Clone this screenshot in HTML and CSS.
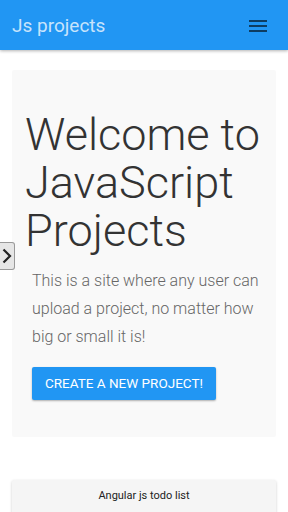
FILE: index.html
```html
<!DOCTYPE html>
<html>
<head>
<meta charset="utf-8">
<title>Js projects</title>
<link rel="stylesheet" href="styles.css">
</head>
<body>
<nav class="navbar">
	<span class="brand">Js projects</span>
	<button class="toggler" aria-label="menu">
		<span class="bar"></span>
		<span class="bar"></span>
		<span class="bar"></span>
	</button>
</nav>

<button class="side-toggle" aria-label="open sidebar">
	<svg width="12" height="20" viewBox="0 0 12 20"><path d="M2.5 3.5 L9 10 L2.5 16.5" fill="none" stroke="#222" stroke-width="2.2"/></svg>
</button>

<div class="container">
	<div class="jumbotron">
		<h1>Welcome to JavaScript Projects</h1>
		<div class="lead-wrap">
			<p class="lead">This is a site where any user can upload a project, no matter how big or small it is!</p>
			<a class="btn" href="#">Create a new project!</a>
		</div>
	</div>

	<div class="card">
		<div class="card-title">Angular js todo list</div>
	</div>
</div>
</body>
</html>
```

FILE: styles.css
```css
body {
	margin: 0;
	background-color: #fff;
	font-family: Roboto, "Noto Sans", Arial, sans-serif;
	color: #333;
	overflow: hidden;
	height: 512px;
}

.navbar {
	height: 50px;
	background-color: #2196f3;
	box-shadow: 0 1px 3px rgba(0, 0, 0, 0.3);
	display: flex;
	align-items: center;
	justify-content: space-between;
	padding: 0 21px 0 12px;
}

.brand {
	color: rgba(255, 255, 255, 0.75);
	font-size: 19px;
	margin-top: 0;
}

.toggler {
	background: none;
	border: none;
	padding: 0;
	display: flex;
	flex-direction: column;
	gap: 3px;
	margin-top: 1px;
}

.toggler .bar {
	display: block;
	width: 18px;
	height: 2px;
	background-color: rgba(0, 0, 0, 0.6);
}

.side-toggle {
	position: absolute;
	left: 0;
	top: 242px;
	width: 15px;
	height: 28px;
	padding: 0;
	border: 1px solid #999;
	border-left: none;
	border-radius: 0 3px 3px 0;
	background-color: #e6e6e6;
	display: flex;
	align-items: center;
	justify-content: center;
}

.container {
	padding: 20px 12px 0;
}

.jumbotron {
	background-color: #f9f9f9;
	padding: 41px 12px 37px 13px;
	border-radius: 2px;
}

h1 {
	font-size: 45px;
	font-weight: 300;
	line-height: 48px;
	margin: 0 0 12px;
	color: #333;
}

.lead-wrap {
	padding-left: 7px;
}

.lead {
	font-size: 16px;
	font-weight: 300;
	line-height: 28px;
	color: #666;
	margin: 0 0 16px;
}

.btn {
	display: inline-block;
	background-color: #2196f3;
	color: #fff;
	text-decoration: none;
	text-transform: uppercase;
	font-size: 13.5px;
	line-height: 19px;
	padding: 7px 13px;
	border-radius: 2px;
	box-shadow: 0 1px 2px rgba(0, 0, 0, 0.3);
}

.card {
	margin-top: 43px;
	background-color: #f5f5f5;
	border-radius: 2px;
	box-shadow: 0 1px 3px rgba(0, 0, 0, 0.2);
	padding: 9px 10px;
	height: 60px;
}

.card-title {
	text-align: center;
	font-size: 11px;
	color: #222;
}
```
